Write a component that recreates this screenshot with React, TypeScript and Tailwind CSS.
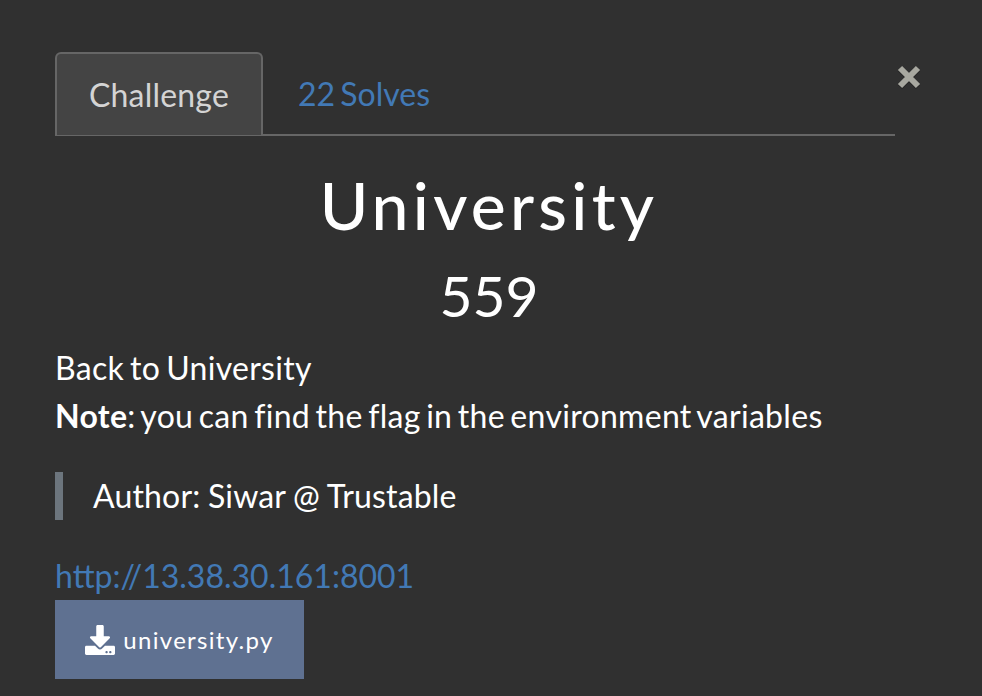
import { FaDownload } from "react-icons/fa";

export default function App() {
  return (
    <div className="w-[982px] h-[696px] overflow-hidden bg-[#303030] text-white font-['Lato',sans-serif] flex flex-col pl-[55px] pr-[59px] pt-[52px] relative">
      <div className="flex border-b-2 border-[#666666] h-[84px] mr-[28px]">
        <div className="w-[208px] h-[83px] bg-[#444444] border-2 border-b-0 border-[#666666] rounded-t-[6px] flex items-center justify-center text-[32px] tracking-[0.2px] text-[#d4d4d4]">Challenge</div>
        <div className="ml-[35px] flex items-center pt-[2px] text-[32px] [word-spacing:-3px] text-[#4279b5]">22 Solves</div>
      </div>
      <svg className="absolute left-[896px] top-[64px] drop-shadow-[0_1px_0_#222222]" width="26" height="26" viewBox="0 0 26 26">
        <path d="M4 4 L22 22 M22 4 L4 22" stroke="#a8a8a0" strokeWidth="6" />
      </svg>
      <h1 className="text-center text-[66px] leading-[72px] mt-[33px] font-medium tracking-[4.3px]">University</h1>
      <div className="text-center text-[57px] leading-[64px] mt-[22px]">559</div>
      <p className="text-[32px] leading-[48px] mt-[17px] tracking-[0.3px]">
        <span className="[word-spacing:-2.5px]">Back to University</span>
        <br />
        <span className="[word-spacing:-3px]"><b>Note</b>: you can find the flag in the environment variables</span>
      </p>
      <div className="mt-[32px] border-l-[8px] border-[#6c757d] pl-[30px] h-[48px] flex items-center text-[32px] tracking-[0.16px] [word-spacing:-0.75px]">Author: Siwar @ Trustable</div>
      <a className="text-[32px] leading-[48px] mt-[32px] text-[#4279b5]">http://13.38.30.161:8001</a>
      <div className="w-[249px] h-[79px] bg-[#5f7191] flex items-center justify-center gap-[8px] text-[24px] tracking-[1.3px]"><FaDownload size={30}/>university.py</div>
    </div>
  );
}
